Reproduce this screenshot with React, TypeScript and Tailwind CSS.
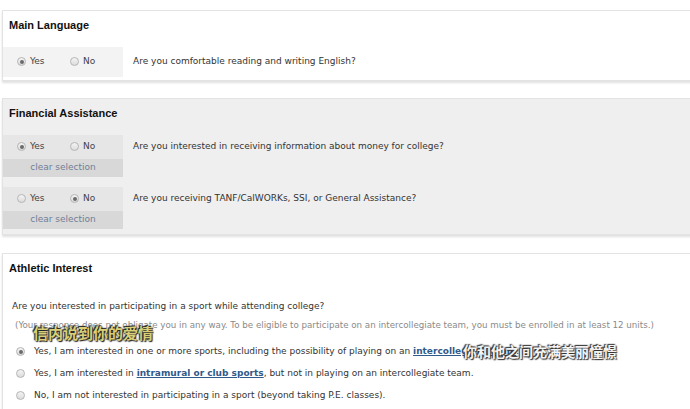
import React from 'react';

const verdana = 'font-["DejaVu_Sans",Verdana,sans-serif]';

// small grey radio circle, filled when checked
const Radio: React.FC<{ checked?: boolean }> = ({ checked }) => (
  <span className="inline-flex h-[9px] w-[9px] shrink-0 items-center justify-center rounded-full border border-[#b5b5b5] bg-gradient-to-b from-[#f4f4f4] to-[#dcdcdc]">
    {checked && <span className="h-[4px] w-[4px] rounded-full bg-[#6b6b6b]" />}
  </span>
);

const YesNo: React.FC<{ value: 'yes' | 'no' }> = ({ value }) => (
  <div className={`flex items-center text-[9px] text-[#444] ${verdana}`}>
    <span className="flex w-[53px] items-center gap-[4px] pl-[14px]">
      <Radio checked={value === 'yes'} />
      Yes
    </span>
    <span className="flex items-center gap-[4px] pl-[14px]">
      <Radio checked={value === 'no'} />
      No
    </span>
  </div>
);

const Panel: React.FC<{ title: string; grey?: boolean; className?: string; children: React.ReactNode }> = ({
  title,
  grey,
  className = '',
  children,
}) => (
  <div
    className={`w-[720px] border border-[#e3e3e3] shadow-[0_2px_2px_rgba(0,0,0,0.12)] ${
      grey ? 'bg-[#efefef]' : 'bg-white'
    } ${className}`}
  >
    <h2 className='pl-[6px] pt-[6px] font-["Liberation_Sans",Arial,sans-serif] text-[11px] font-bold text-[#111]'>
      {title}
    </h2>
    {children}
  </div>
);

// question row with yes/no box on the left
const QuestionRow: React.FC<{ value: 'yes' | 'no'; clear?: boolean; box: string; strip?: string; children: React.ReactNode }> = ({
  value,
  clear,
  box,
  strip,
  children,
}) => (
  <div className="flex">
    <div className={`w-[120px] ${box}`}>
      <div className={`flex items-center ${clear ? 'h-[24px]' : 'h-[30px]'}`}>
        <YesNo value={value} />
      </div>
      {clear && (
        <div className={`flex h-[18px] items-center justify-center text-[9px] text-[#6f7f99] ${verdana} ${strip}`}>
          clear selection
        </div>
      )}
    </div>
    <div className={`flex pl-[10px] text-[9px] text-[#333] ${verdana} ${clear ? 'h-[24px] items-center' : 'items-center'}`}>
      {children}
    </div>
  </div>
);

export default function App() {
  return (
    <div className="relative h-[409px] w-[690px] overflow-hidden bg-white pl-[2px] pt-[10px]">
      <Panel title="Main Language" className="h-[71px]">
        <div className="mt-[13px]">
          <QuestionRow value="yes" box="bg-[#f3f3f3]">
            Are you comfortable reading and writing English?
          </QuestionRow>
        </div>
      </Panel>

      <Panel title="Financial Assistance" grey className="mt-[17px] h-[137px]">
        <div className="mt-[13px] flex flex-col gap-[10px]">
          <QuestionRow value="yes" clear box="bg-[#e6e6e6]" strip="bg-[#d8d8d8]">
            Are you interested in receiving information about money for college?
          </QuestionRow>
          <QuestionRow value="no" clear box="bg-[#e6e6e6]" strip="bg-[#d8d8d8]">
            Are you receiving TANF/CalWORKs, SSI, or General Assistance?
          </QuestionRow>
        </div>
      </Panel>

      <Panel title="Athletic Interest" className="mt-[18px] h-[200px]">
        <div className={`text-[9px] text-[#333] ${verdana}`}>
          <p className="mt-[23px] pl-[9px]">Are you interested in participating in a sport while attending college?</p>
          <p className="mt-[6px] whitespace-nowrap pl-[12px] text-[8.7px] text-[#8a8a8a]">
            (Your response does not obligate you in any way. To be eligible to participate on an intercollegiate team, you must
            be enrolled in at least 12 units.)
          </p>
          <div className="mt-[13px] flex flex-col gap-[8.5px] pl-[13px]">
            <label className="flex items-center gap-[9px]">
              <Radio checked />
              <span>
                Yes, I am interested in one or more sports, including the possibility of playing on an{' '}
                <a className="font-bold text-[#2f5a8a] underline">intercollegiate team</a>.
              </span>
            </label>
            <label className="flex items-center gap-[9px]">
              <Radio />
              <span>
                Yes, I am interested in <a className="font-bold text-[#2f5a8a] underline">intramural or club sports</a>, but not
                in playing on an intercollegiate team.
              </span>
            </label>
            <label className="flex items-center gap-[9px]">
              <Radio />
              <span>No, I am not interested in participating in a sport (beyond taking P.E. classes).</span>
            </label>
          </div>
        </div>
      </Panel>

      {/* subtitle overlays burned into the capture */}
      <div className='absolute left-[33px] top-[325px] font-["Noto_Sans_CJK_SC",sans-serif] text-[15px] font-bold leading-none text-[#d9cf78] [text-shadow:0_0_2px_#222,1px_1px_1px_#222,-1px_-1px_1px_#222]'>
        信内说到你的爱情
      </div>
      <div className='absolute left-[463px] top-[344px] font-["Noto_Sans_CJK_SC",sans-serif] text-[14px] font-bold leading-none text-[#f4f4f4] [text-shadow:0_0_2px_#333,1px_1px_1px_#333,-1px_-1px_1px_#333]'>
        你和他之间充满美丽憧憬
      </div>
    </div>
  );
}
